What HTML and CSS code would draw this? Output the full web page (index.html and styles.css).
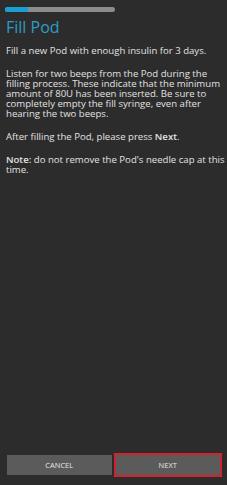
FILE: index.html
```html
<!DOCTYPE html>
<html>
<head>
<meta charset="utf-8">
<link rel="stylesheet" href="styles.css">
</head>
<body>
<div class="screen">
  <div class="content">
    <div class="progress"><div class="progress-fill"></div></div>
    <h1 class="title">Fill Pod</h1>
    <p class="para">Fill a new Pod with enough insulin for 3 days.</p>
    <p class="para">Listen for two beeps from the Pod during the filling process. These indicate that the minimum amount of 80U has been inserted. Be sure to completely empty the fill syringe, even after hearing the two beeps.</p>
    <p class="para">After filling the Pod, please press <b>Next</b>.</p>
    <p class="para"><b>Note:</b> do not remove the Pod's needle cap at this time.</p>
  </div>
  <div class="actions">
    <button class="btn">CANCEL</button>
    <button class="btn btn-focus">NEXT</button>
  </div>
</div>
</body>
</html>
```
FILE: styles.css
```css
html, body {
  margin: 0;
  padding: 0;
  background: #2c2c2c;
}
.screen {
  width: 227px;
  height: 485px;
  display: flex;
  flex-direction: column;
  font-family: "Open Sans", "Noto Sans", sans-serif;
  color: #e2e2e2;
}
.content {
  flex: 1;
  padding: 7px 0 0 6px;
}
.progress {
  width: 110px;
  height: 5px;
  border-radius: 3px;
  background: #8c8c8c;
  margin-left: -1px;
  overflow: hidden;
}
.progress-fill {
  width: 23px;
  height: 100%;
  background: #1b9ed6;
}
.title {
  margin: 5px 0 0 0;
  font-size: 16px;
  line-height: 20px;
  font-weight: 400;
  color: #2c9cc7;
}
.para {
  margin: 0 0 13px 0;
  font-size: 9.6px;
  line-height: 10px;
}
.title + .para {
  margin-top: 9px;
}
.para b {
  font-weight: 600;
}
.actions {
  display: flex;
  gap: 4px;
  padding: 0 7px 10px 7px;
}
.btn {
  flex: 1;
  height: 20px;
  border: none;
  margin: 0;
  padding: 0;
  background: #5b5b5b;
  color: #e6e6e6;
  font-family: "Open Sans", "Noto Sans", sans-serif;
  font-size: 7.5px;
}
.btn-focus {
  outline: 2px solid #d2222c;
}
```
